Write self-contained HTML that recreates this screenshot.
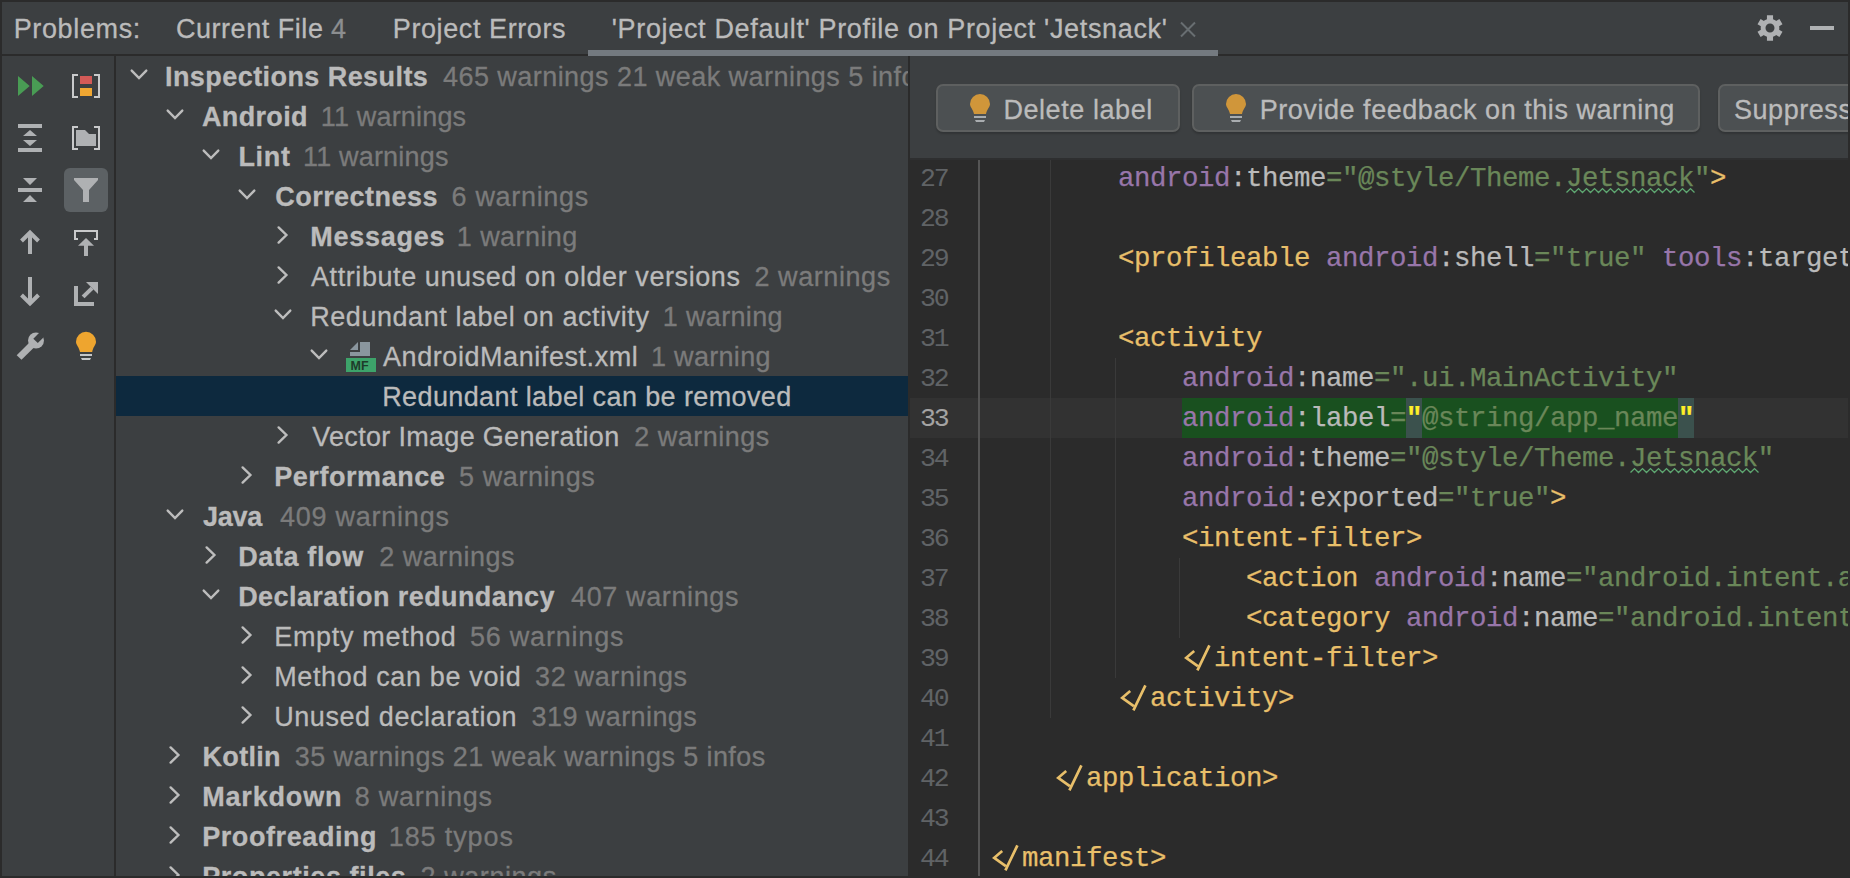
<!DOCTYPE html>
<html><head><meta charset="utf-8">
<style>
*{margin:0;padding:0;box-sizing:border-box}
html,body{width:1850px;height:878px;overflow:hidden}
body{position:relative;background:#2B2B2B;font-family:"Liberation Sans",sans-serif;font-size:27px;color:#BBBBBB}
.a{position:absolute}
.ht{white-space:nowrap;letter-spacing:0.55px;line-height:40px;height:40px;top:9px;-webkit-text-stroke:0.3px currentColor}
.row{position:absolute;left:116px;width:792px;height:40px;overflow:hidden}
.tx{position:absolute;white-space:nowrap;line-height:40px;-webkit-text-stroke:0.3px currentColor}
.c{color:#7B7B7B}
.btn{position:absolute;top:84px;height:48px;border:2px solid #5E6060;border-radius:7px;background:#4C5052;box-shadow:0 2px 2px rgba(0,0,0,0.18)}
.bt{position:absolute;top:90px;white-space:nowrap;line-height:40px;letter-spacing:0.55px;color:#BBBBBB;-webkit-text-stroke:0.3px currentColor}
.ln{position:absolute;left:910px;width:68px;height:40px;line-height:40px;font-family:"Liberation Mono",monospace;font-size:26.5px;letter-spacing:-2.2px;color:#606366;white-space:pre;margin-top:1px}
.cd{position:absolute;left:990px;height:40px;line-height:40px;margin-top:1px;font-family:"Liberation Mono",monospace;font-size:27.4px;letter-spacing:-0.44px;white-space:pre;color:#BABABA;-webkit-text-stroke:0.25px currentColor}
.tg{color:#E8BF6A}.ns{color:#9876AA}.at{color:#BABABA}.vl{color:#6A8759}
</style></head><body>

<div class="a" style="left:2px;top:2px;width:1846px;height:874px;background:#3C3F41"></div>
<div class="a" style="left:2px;top:54px;width:1846px;height:2px;background:#2B2B2B"></div>
<div class="a" style="left:588px;top:50px;width:630px;height:6px;background:#747A80"></div>
<div class="a" style="left:114px;top:56px;width:2px;height:820px;background:#2B2B2B"></div>
<div class="a" style="left:908px;top:56px;width:2px;height:820px;background:#2B2B2B"></div>
<div class="a ht" style="left:13.70px;letter-spacing:0.638px">Problems:</div>
<div class="a ht" style="left:175.90px;letter-spacing:0.545px">Current File</div>
<div class="a ht" style="left:331.00px;letter-spacing:0.550px;color:#8C8E90">4</div>
<div class="a ht" style="left:392.80px;letter-spacing:0.592px">Project Errors</div>
<div class="a ht" style="left:611.80px;letter-spacing:0.657px">'Project Default' Profile on Project 'Jetsnack'</div>
<svg class="a" style="left:0;top:0" width="1850" height="878">
<path d="M1181 22.5 L1195 36.5 M1195 22.5 L1181 36.5" stroke="#686E71" stroke-width="2" fill="none"/>
<path d="M1763.91 20.97 L1764.37 20.60 L1764.85 20.26 L1765.35 19.95 L1765.87 19.67 L1766.41 19.42 L1766.96 19.21 L1766.93 15.37 L1773.07 15.37 L1773.04 19.21 L1773.04 19.21 L1773.59 19.42 L1774.13 19.67 L1774.65 19.95 L1775.15 20.26 L1775.63 20.60 L1776.09 20.97 L1779.40 19.02 L1782.48 24.34 L1779.13 26.24 L1779.13 26.24 L1779.23 26.82 L1779.28 27.41 L1779.30 28.00 L1779.28 28.59 L1779.23 29.18 L1779.13 29.76 L1782.48 31.66 L1779.40 36.98 L1776.09 35.03 L1776.09 35.03 L1775.63 35.40 L1775.15 35.74 L1774.65 36.05 L1774.13 36.33 L1773.59 36.58 L1773.04 36.79 L1773.07 40.63 L1766.93 40.63 L1766.96 36.79 L1766.96 36.79 L1766.41 36.58 L1765.87 36.33 L1765.35 36.05 L1764.85 35.74 L1764.37 35.40 L1763.91 35.03 L1760.60 36.98 L1757.52 31.66 L1760.87 29.76 L1760.87 29.76 L1760.77 29.18 L1760.72 28.59 L1760.70 28.00 L1760.72 27.41 L1760.77 26.82 L1760.87 26.24 L1757.52 24.34 L1760.60 19.02 L1763.91 20.97 Z M1765.50 28.00 a4.5 4.5 0 1 0 9 0 a4.5 4.5 0 1 0 -9 0 Z" fill="#AFB1B3" fill-rule="evenodd"/>
<rect x="1810" y="26" width="24" height="4" fill="#AFB1B3"/>
<path d="M18 76 L29.7 86 L18 96 Z M32 76 L43.7 86 L32 96 Z" fill="#499C54"/>
<rect x="18" y="124" width="24" height="4" fill="#AFB1B3"/>
<rect x="18" y="148" width="24" height="4" fill="#AFB1B3"/>
<path d="M23 136 L37 136 L30 130 Z M23 140 L37 140 L30 146 Z" fill="#AFB1B3"/>
<path d="M23 178 L37 178 L30 185 Z M23 202 L37 202 L30 195 Z" fill="#AFB1B3"/>
<rect x="18" y="188" width="24" height="4" fill="#AFB1B3"/>
<path d="M21.5 241 L30 232.5 L38.5 241 M30 233 L30 254" stroke="#AFB1B3" stroke-width="4" fill="none"/>
<path d="M21.5 295 L30 303.5 L38.5 295 M30 277 L30 303" stroke="#AFB1B3" stroke-width="4" fill="none"/>
<defs><mask id="wm"><rect x="0" y="300" width="60" height="80" fill="#fff"/><path d="M33.3 338.7 L37.8 343 L47 334 L42.5 329.5 Z" fill="#000"/></mask></defs>
<g mask="url(#wm)"><circle cx="36" cy="340.5" r="8" fill="#AFB1B3"/>
<path d="M16.7 355.2 L21.5 359.8 L35 346.5 L30.3 341.8 Z" fill="#AFB1B3"/></g>
<path d="M78 75 L73 75 L73 97 L78 97 M94 75 L99 75 L99 97 L94 97" stroke="#C9CACB" stroke-width="2" fill="none"/>
<rect x="80" y="76" width="12" height="8" fill="#D35A57"/>
<rect x="80" y="88" width="12" height="8" fill="#F0A732"/>
<path d="M78 127 L73 127 L73 149 L78 149 M94 127 L99 127 L99 149 L94 149" stroke="#C9CACB" stroke-width="2" fill="none"/>
<path d="M76 130 L85 130 L89 134 L96 134 L96 146 L76 146 Z" fill="#AFB1B3"/>
<rect x="64" y="168" width="44" height="44" rx="6" fill="#5C6164"/>
<path d="M74 178 L98 178 L98 180 L89 190 L89 202 L83 202 L83 190 L74 180 Z" fill="#AFB1B3"/>
<path d="M78 239 L75 239 L75 231 L97 231 L97 239 L94 239" stroke="#C9CACB" stroke-width="2" fill="none"/>
<path d="M86 238 L94 245.7 L78 245.7 Z" fill="#AFB1B3"/>
<rect x="84" y="245" width="4" height="11" fill="#AFB1B3"/>
<path d="M74 286 L78 286 L78 302 L94 302 L94 306 L74 306 Z" fill="#AFB1B3"/>
<path d="M86 282 L98 282 L98 294 Z" fill="#AFB1B3"/>
<path d="M81.7 295.6 L84.5 298.3 L93.5 289.5 L90.7 286.7 Z" fill="#AFB1B3"/>
<path d="M80 352 L92.2 352 C93 347 96 345 96 341.8 A10 10 0 0 0 76 341.8 C76 345 79 347 80 352 Z" fill="#EEA52F"/>
<rect x="80" y="354" width="12" height="2" fill="#C4C6C8"/>
<path d="M81 358 L91 358 L90 360 L82 360 Z" fill="#C4C6C8"/>
<path d="M131.7 70.6 L139.0 78.0 L146.3 70.6" stroke="#BDBDBD" stroke-width="2.4" stroke-linecap="round" fill="none"/>
<path d="M167.7 110.6 L175.0 118.0 L182.3 110.6" stroke="#BDBDBD" stroke-width="2.4" stroke-linecap="round" fill="none"/>
<path d="M203.7 150.6 L211.0 158.0 L218.3 150.6" stroke="#BDBDBD" stroke-width="2.4" stroke-linecap="round" fill="none"/>
<path d="M239.7 190.6 L247.0 198.0 L254.3 190.6" stroke="#BDBDBD" stroke-width="2.4" stroke-linecap="round" fill="none"/>
<path d="M278.6 227.4 L286.4 235.0 L278.6 242.6" stroke="#BDBDBD" stroke-width="2.4" stroke-linecap="round" fill="none"/>
<path d="M278.6 267.4 L286.4 275.0 L278.6 282.6" stroke="#BDBDBD" stroke-width="2.4" stroke-linecap="round" fill="none"/>
<path d="M275.7 310.6 L283.0 318.0 L290.3 310.6" stroke="#BDBDBD" stroke-width="2.4" stroke-linecap="round" fill="none"/>
<path d="M311.7 350.6 L319.0 358.0 L326.3 350.6" stroke="#BDBDBD" stroke-width="2.4" stroke-linecap="round" fill="none"/>
<path d="M278.6 427.4 L286.4 435.0 L278.6 442.6" stroke="#BDBDBD" stroke-width="2.4" stroke-linecap="round" fill="none"/>
<path d="M242.6 467.4 L250.4 475.0 L242.6 482.6" stroke="#BDBDBD" stroke-width="2.4" stroke-linecap="round" fill="none"/>
<path d="M167.7 510.6 L175.0 518.0 L182.3 510.6" stroke="#BDBDBD" stroke-width="2.4" stroke-linecap="round" fill="none"/>
<path d="M206.6 547.4 L214.4 555.0 L206.6 562.6" stroke="#BDBDBD" stroke-width="2.4" stroke-linecap="round" fill="none"/>
<path d="M203.7 590.6 L211.0 598.0 L218.3 590.6" stroke="#BDBDBD" stroke-width="2.4" stroke-linecap="round" fill="none"/>
<path d="M242.6 627.4 L250.4 635.0 L242.6 642.6" stroke="#BDBDBD" stroke-width="2.4" stroke-linecap="round" fill="none"/>
<path d="M242.6 667.4 L250.4 675.0 L242.6 682.6" stroke="#BDBDBD" stroke-width="2.4" stroke-linecap="round" fill="none"/>
<path d="M242.6 707.4 L250.4 715.0 L242.6 722.6" stroke="#BDBDBD" stroke-width="2.4" stroke-linecap="round" fill="none"/>
<path d="M170.6 747.4 L178.4 755.0 L170.6 762.6" stroke="#BDBDBD" stroke-width="2.4" stroke-linecap="round" fill="none"/>
<path d="M170.6 787.4 L178.4 795.0 L170.6 802.6" stroke="#BDBDBD" stroke-width="2.4" stroke-linecap="round" fill="none"/>
<path d="M170.6 827.4 L178.4 835.0 L170.6 842.6" stroke="#BDBDBD" stroke-width="2.4" stroke-linecap="round" fill="none"/>
<path d="M170.6 867.4 L178.4 875.0 L170.6 882.6" stroke="#BDBDBD" stroke-width="2.4" stroke-linecap="round" fill="none"/>
</svg>
<div class="a" style="left:116px;top:376px;width:792px;height:40px;background:#0D293E"></div>
<div class="a" style="left:0;top:0;width:908px;height:876px;overflow:hidden">
<div class="tx" style="top:57px;left:165.00px;letter-spacing:0.433px;font-weight:bold">Inspections Results</div>
<div class="tx c" style="top:57px;left:443.00px;letter-spacing:0.450px">465 warnings 21 weak warnings 5 infos</div>
<div class="tx" style="top:97px;left:202.00px;letter-spacing:0.333px;font-weight:bold">Android</div>
<div class="tx c" style="top:97px;left:320.80px;letter-spacing:0.170px">11 warnings</div>
<div class="tx" style="top:137px;left:238.40px;letter-spacing:0.667px;font-weight:bold">Lint</div>
<div class="tx c" style="top:137px;left:303.00px;letter-spacing:0.180px">11 warnings</div>
<div class="tx" style="top:177px;left:275.20px;letter-spacing:0.480px;font-weight:bold">Correctness</div>
<div class="tx c" style="top:177px;left:451.60px;letter-spacing:0.667px">6 warnings</div>
<div class="tx" style="top:217px;left:310.20px;letter-spacing:0.743px;font-weight:bold">Messages</div>
<div class="tx c" style="top:217px;left:456.80px;letter-spacing:0.425px">1 warning</div>
<div class="tx" style="top:257px;left:311.00px;letter-spacing:0.582px;font-weight:normal">Attribute unused on older versions</div>
<div class="tx c" style="top:257px;left:754.40px;letter-spacing:0.578px">2 warnings</div>
<div class="tx" style="top:297px;left:310.20px;letter-spacing:0.558px;font-weight:normal">Redundant label on activity</div>
<div class="tx c" style="top:297px;left:662.80px;letter-spacing:0.338px">1 warning</div>
<div class="tx" style="top:337px;left:383.00px;letter-spacing:0.567px;font-weight:normal">AndroidManifest.xml</div>
<div class="tx c" style="top:337px;left:651.00px;letter-spacing:0.300px">1 warning</div>
<div class="tx" style="top:377px;left:382.20px;letter-spacing:0.390px;font-weight:normal">Redundant label can be removed</div>
<div class="tx" style="top:417px;left:312.20px;letter-spacing:0.309px;font-weight:normal">Vector Image Generation</div>
<div class="tx c" style="top:417px;left:634.20px;letter-spacing:0.500px">2 warnings</div>
<div class="tx" style="top:457px;left:274.20px;letter-spacing:0.560px;font-weight:bold">Performance</div>
<div class="tx c" style="top:457px;left:459.10px;letter-spacing:0.567px">5 warnings</div>
<div class="tx" style="top:497px;left:202.90px;letter-spacing:-0.200px;font-weight:bold">Java</div>
<div class="tx c" style="top:497px;left:280.00px;letter-spacing:0.755px">409 warnings</div>
<div class="tx" style="top:537px;left:238.20px;letter-spacing:0.625px;font-weight:bold">Data flow</div>
<div class="tx c" style="top:537px;left:379.20px;letter-spacing:0.533px">2 warnings</div>
<div class="tx" style="top:577px;left:238.20px;letter-spacing:0.419px;font-weight:bold">Declaration redundancy</div>
<div class="tx c" style="top:577px;left:571.10px;letter-spacing:0.618px">407 warnings</div>
<div class="tx" style="top:617px;left:274.20px;letter-spacing:0.691px;font-weight:normal">Empty method</div>
<div class="tx c" style="top:617px;left:469.90px;letter-spacing:0.800px">56 warnings</div>
<div class="tx" style="top:657px;left:274.20px;letter-spacing:0.641px;font-weight:normal">Method can be void</div>
<div class="tx c" style="top:657px;left:535.00px;letter-spacing:0.650px">32 warnings</div>
<div class="tx" style="top:697px;left:274.20px;letter-spacing:0.576px;font-weight:normal">Unused declaration</div>
<div class="tx c" style="top:697px;left:531.50px;letter-spacing:0.427px">319 warnings</div>
<div class="tx" style="top:737px;left:202.60px;letter-spacing:0.280px;font-weight:bold">Kotlin</div>
<div class="tx c" style="top:737px;left:294.80px;letter-spacing:0.403px">35 warnings 21 weak warnings 5 infos</div>
<div class="tx" style="top:777px;left:202.20px;letter-spacing:0.829px;font-weight:bold">Markdown</div>
<div class="tx c" style="top:777px;left:354.80px;letter-spacing:0.733px">8 warnings</div>
<div class="tx" style="top:817px;left:202.20px;letter-spacing:0.582px;font-weight:bold">Proofreading</div>
<div class="tx c" style="top:817px;left:388.80px;letter-spacing:0.875px">185 typos</div>
<div class="tx" style="top:857px;left:202.20px;letter-spacing:0.573px;font-weight:bold">Properties files</div>
<div class="tx c" style="top:857px;left:420.60px;letter-spacing:0.556px">2 warnings</div>
</div>
<svg class="a" style="left:0;top:0" width="1850" height="878">
<path d="M350 350 L358 342 L358 350 Z" fill="#8A969E"/>
<path d="M360 342 L370 342 L370 356 L350 356 L350 352 L360 352 Z" fill="#8A969E"/>
<rect x="346" y="358" width="30" height="14" fill="#3DA36A"/>
<text x="350.5" y="369.6" font-family="Liberation Sans" font-weight="bold" font-size="12.5" fill="#1E3B2A">MF</text>
</svg>
<div class="btn" style="left:936px;width:244px"></div>
<div class="btn" style="left:1192px;width:508px"></div>
<div class="btn" style="left:1718px;width:200px"></div>
<div class="bt" style="left:1003.40px;letter-spacing:0.573px">Delete label</div>
<div class="bt" style="left:1259.70px;letter-spacing:0.545px">Provide feedback on this warning</div>
<div class="bt" style="left:1734.00px;letter-spacing:0.550px">Suppress</div>
<svg class="a" style="left:0;top:0" width="1850" height="878">
<path d="M974.0 114.0 L986.0 114.0 C987.0 109.0 990.0 107.0 990.0 104.0 A10 10 0 0 0 970.0 104.0 C970.0 107.0 973.0 109.0 974.0 114.0 Z" fill="#D0963A"/><rect x="974.0" y="116.0" width="12" height="2" fill="#A9ADB0"/><path d="M975.0 120.0 L985.0 120.0 L984.0 122.0 L976.0 122.0 Z" fill="#A9ADB0"/>
<path d="M1230.0 114.0 L1242.0 114.0 C1243.0 109.0 1246.0 107.0 1246.0 104.0 A10 10 0 0 0 1226.0 104.0 C1226.0 107.0 1229.0 109.0 1230.0 114.0 Z" fill="#D0963A"/><rect x="1230.0" y="116.0" width="12" height="2" fill="#A9ADB0"/><path d="M1231.0 120.0 L1241.0 120.0 L1240.0 122.0 L1232.0 122.0 Z" fill="#A9ADB0"/>
</svg>
<div class="a" style="left:910px;top:158px;width:938px;height:718px;background:#2B2B2B;overflow:hidden"></div>
<div class="a" style="left:910px;top:158px;width:938px;height:2px;background:#2E2F30"></div>
<div class="a" style="left:910px;top:398px;width:938px;height:40px;background:#323232"></div>
<div class="a" style="left:978px;top:160px;width:2px;height:716px;background:#555555"></div>
<div class="a" style="left:1050px;top:160px;width:1px;height:558px;background:#3A3A3A"></div>
<div class="a" style="left:1115px;top:358px;width:1px;height:320px;background:#3A3A3A"></div>
<div class="a" style="left:1179px;top:558px;width:1px;height:80px;background:#3A3A3A"></div>
<div class="a" style="left:1182px;top:398px;width:496px;height:40px;background:#19501F"></div>
<div class="a" style="left:1406px;top:398px;width:16px;height:40px;background:#3B514D"></div>
<div class="a" style="left:1678px;top:398px;width:16px;height:40px;background:#3B514D"></div>
<div class="ln" style="top:158px;color:#606366;padding-left:10px">27</div>
<div class="cd" style="top:158px">        <span class="ns">android</span>:theme<span class="vl">="@style/Theme.Jetsnack"</span><span class="tg">></span></div>
<div class="ln" style="top:198px;color:#606366;padding-left:10px">28</div>
<div class="cd" style="top:198px"></div>
<div class="ln" style="top:238px;color:#606366;padding-left:10px">29</div>
<div class="cd" style="top:238px">        <span class="tg">&lt;profileable</span> <span class="ns">android</span>:shell<span class="vl">="true"</span> <span class="ns">tools</span>:targetApi<span class="vl">="29"</span><span class="tg">/></span></div>
<div class="ln" style="top:278px;color:#606366;padding-left:10px">30</div>
<div class="cd" style="top:278px"></div>
<div class="ln" style="top:318px;color:#606366;padding-left:10px">31</div>
<div class="cd" style="top:318px">        <span class="tg">&lt;activity</span></div>
<div class="ln" style="top:358px;color:#606366;padding-left:10px">32</div>
<div class="cd" style="top:358px">            <span class="ns">android</span>:name<span class="vl">=".ui.MainActivity"</span></div>
<div class="ln" style="top:398px;color:#A4A3A3;padding-left:10px">33</div>
<div class="cd" style="top:398px">            <span class="ns">android</span>:label<span class="vl">=</span><span style="color:#FFEF28;font-weight:bold">"</span><span class="vl">@string/app_name</span><span style="color:#FFEF28;font-weight:bold">"</span></div>
<div class="ln" style="top:438px;color:#606366;padding-left:10px">34</div>
<div class="cd" style="top:438px">            <span class="ns">android</span>:theme<span class="vl">="@style/Theme.Jetsnack"</span></div>
<div class="ln" style="top:478px;color:#606366;padding-left:10px">35</div>
<div class="cd" style="top:478px">            <span class="ns">android</span>:exported<span class="vl">="true"</span><span class="tg">></span></div>
<div class="ln" style="top:518px;color:#606366;padding-left:10px">36</div>
<div class="cd" style="top:518px">            <span class="tg">&lt;intent-filter></span></div>
<div class="ln" style="top:558px;color:#606366;padding-left:10px">37</div>
<div class="cd" style="top:558px">                <span class="tg">&lt;action</span> <span class="ns">android</span>:name<span class="vl">="android.intent.action.MAIN"</span> <span class="tg">/></span></div>
<div class="ln" style="top:598px;color:#606366;padding-left:10px">38</div>
<div class="cd" style="top:598px">                <span class="tg">&lt;category</span> <span class="ns">android</span>:name<span class="vl">="android.intent.category.LAUNCHER"</span> <span class="tg">/></span></div>
<div class="ln" style="top:638px;color:#606366;padding-left:10px">39</div>
<div class="cd" style="top:638px">            <span class="tg"><span style="display:inline-block;width:32px;height:40px;vertical-align:top;position:relative"><svg style="position:absolute;left:0;top:0" width="32" height="40"><path d="M12.2 12 L4.2 18.8 L15.8 27.2 M27.4 6.4 L15.4 31.4" stroke="#E8BF6A" stroke-width="2.7" fill="none" stroke-linecap="butt"/></svg></span>intent-filter></span></div>
<div class="ln" style="top:678px;color:#606366;padding-left:10px">40</div>
<div class="cd" style="top:678px">        <span class="tg"><span style="display:inline-block;width:32px;height:40px;vertical-align:top;position:relative"><svg style="position:absolute;left:0;top:0" width="32" height="40"><path d="M12.2 12 L4.2 18.8 L15.8 27.2 M27.4 6.4 L15.4 31.4" stroke="#E8BF6A" stroke-width="2.7" fill="none" stroke-linecap="butt"/></svg></span>activity></span></div>
<div class="ln" style="top:718px;color:#606366;padding-left:10px">41</div>
<div class="cd" style="top:718px"></div>
<div class="ln" style="top:758px;color:#606366;padding-left:10px">42</div>
<div class="cd" style="top:758px">    <span class="tg"><span style="display:inline-block;width:32px;height:40px;vertical-align:top;position:relative"><svg style="position:absolute;left:0;top:0" width="32" height="40"><path d="M12.2 12 L4.2 18.8 L15.8 27.2 M27.4 6.4 L15.4 31.4" stroke="#E8BF6A" stroke-width="2.7" fill="none" stroke-linecap="butt"/></svg></span>application></span></div>
<div class="ln" style="top:798px;color:#606366;padding-left:10px">43</div>
<div class="cd" style="top:798px"></div>
<div class="ln" style="top:838px;color:#606366;padding-left:10px">44</div>
<div class="cd" style="top:838px"><span class="tg"><span style="display:inline-block;width:32px;height:40px;vertical-align:top;position:relative"><svg style="position:absolute;left:0;top:0" width="32" height="40"><path d="M12.2 12 L4.2 18.8 L15.8 27.2 M27.4 6.4 L15.4 31.4" stroke="#E8BF6A" stroke-width="2.7" fill="none" stroke-linecap="butt"/></svg></span>manifest></span></div>
<svg class="a" style="left:0;top:0" width="1850" height="878">
<path d="M1566.5 192.6 L1570.5 188.6 L1574.5 192.6 L1578.5 188.6 L1582.5 192.6 L1586.5 188.6 L1590.5 192.6 L1594.5 188.6 L1598.5 192.6 L1602.5 188.6 L1606.5 192.6 L1610.5 188.6 L1614.5 192.6 L1618.5 188.6 L1622.5 192.6 L1626.5 188.6 L1630.5 192.6 L1634.5 188.6 L1638.5 192.6 L1642.5 188.6 L1646.5 192.6 L1650.5 188.6 L1654.5 192.6 L1658.5 188.6 L1662.5 192.6 L1666.5 188.6 L1670.5 192.6 L1674.5 188.6 L1678.5 192.6 L1682.5 188.6 L1686.5 192.6 L1690.5 188.6 L1694.5 192.6" stroke="#5FA872" stroke-width="1.35" fill="none" stroke-linejoin="miter"/>
<path d="M1630.5 472.6 L1634.5 468.6 L1638.5 472.6 L1642.5 468.6 L1646.5 472.6 L1650.5 468.6 L1654.5 472.6 L1658.5 468.6 L1662.5 472.6 L1666.5 468.6 L1670.5 472.6 L1674.5 468.6 L1678.5 472.6 L1682.5 468.6 L1686.5 472.6 L1690.5 468.6 L1694.5 472.6 L1698.5 468.6 L1702.5 472.6 L1706.5 468.6 L1710.5 472.6 L1714.5 468.6 L1718.5 472.6 L1722.5 468.6 L1726.5 472.6 L1730.5 468.6 L1734.5 472.6 L1738.5 468.6 L1742.5 472.6 L1746.5 468.6 L1750.5 472.6 L1754.5 468.6 L1758.5 472.6" stroke="#5FA872" stroke-width="1.35" fill="none" stroke-linejoin="miter"/>
</svg>
<div class="a" style="left:1848px;top:0;width:2px;height:878px;background:#2B2B2B"></div>
<div class="a" style="left:0;top:876px;width:1850px;height:2px;background:#2B2B2B"></div>
</body></html>
